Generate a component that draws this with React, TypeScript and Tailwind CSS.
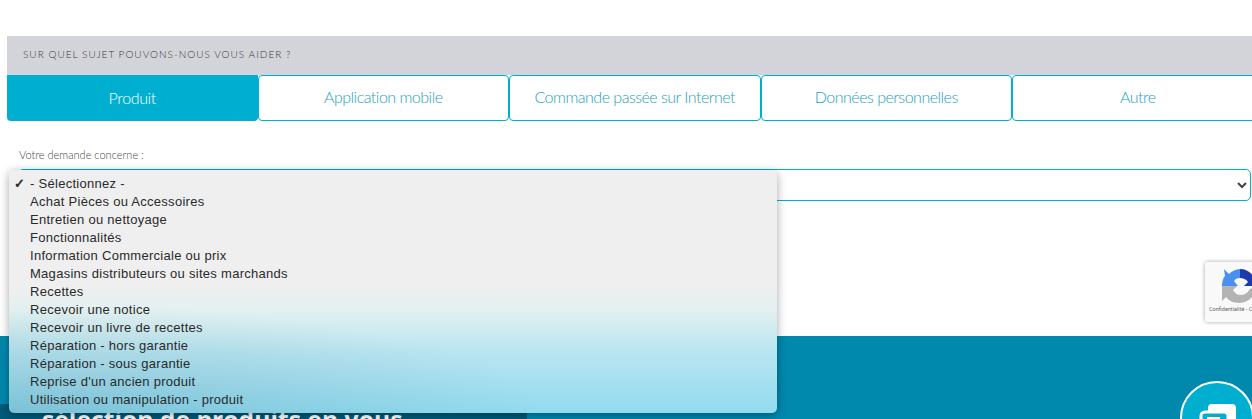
const tabs = ["Application mobile", "Commande passée sur Internet", "Données personnelles", "Autre"]

const options = [
  "- Sélectionnez -",
  "Achat Pièces ou Accessoires",
  "Entretien ou nettoyage",
  "Fonctionnalités",
  "Information Commerciale ou prix",
  "Magasins distributeurs ou sites marchands",
  "Recettes",
  "Recevoir une notice",
  "Recevoir un livre de recettes",
  "Réparation - hors garantie",
  "Réparation - sous garantie",
  "Reprise d'un ancien produit",
  "Utilisation ou manipulation - produit",
]

export default function App() {
  return (
    <div className="relative h-[419px] w-[1252px] overflow-hidden bg-white font-['Lato',sans-serif]">
      <div className="h-[336px] pt-9 pl-[7px]">
        <div className="h-[39px] bg-[#d2d4d9] pl-4 pt-[11px] text-[10px] font-light leading-[14px] tracking-[1.02px] text-[#33373e]">
          SUR QUEL SUJET POUVONS-NOUS VOUS AIDER ?
        </div>
        <div className="flex h-[46px]">
          <div className="flex w-[250.5px] shrink-0 items-center justify-center rounded-b-[4px] bg-[#00afd0] text-[16px] font-light tracking-[-0.35px] text-white">
            Produit
          </div>
          {tabs.map((t) => (
            <div
              key={t}
              className="flex w-[251.5px] shrink-0 items-center justify-center rounded-[4px] border border-[#00afd0] bg-white pb-[2px] text-[16px] font-light tracking-[-0.5px] text-[#1c9fbe]"
            >
              {t}
            </div>
          ))}
        </div>
        <div className="pl-3 pt-[27px] text-[11px] font-light leading-[14px] text-[#444]">
          Votre demande concerne :
        </div>
        <div className="ml-[11px] mt-[7px] flex h-[32px] w-[1233px] items-center justify-end rounded-[5px] border border-[#00afd0] bg-white pr-[2px]">
          <svg width="12" height="12" viewBox="0 0 12 12" fill="none" stroke="#444" strokeWidth="2">
            <path d="M2 4l4 4 4-4" />
          </svg>
        </div>
      </div>

      <div className="absolute left-[1205px] top-[262px] flex h-[60px] w-[70px] flex-col rounded-[2px] bg-[#f9f9f9] pl-[4px] pt-[7px] shadow-[0_0_4px_rgba(0,0,0,0.35)]">
        <svg className="ml-[13px]" width="34" height="34" viewBox="0 0 34 34">
          <path d="M2 0l5 5A16 16 0 0 1 18 0v9c-3 0-5 1-6 3l4 5H0c0-4 1-8 3-10z" fill="#4a90f0" />
          <path d="M18 0c9 0 16 7 16 17H22l4-4c-2-3-5-4-8-4z" fill="#1c3aa9" />
          <path d="M0 17h15l-4 4c2 3 4 5 8 5s7-3 9-6l6-3c0 9-7 17-17 17-6 0-11-3-13-6l-4 4z" fill="#b4b4b4" />
        </svg>
        <div className="mt-[3px] whitespace-nowrap font-['Roboto',sans-serif] text-[5.5px] leading-[7px] text-[#666]">
          Confidentialité - Co
        </div>
      </div>

      <div className="relative h-[83px] bg-[#0088ad] pt-[68px]">
        <div className="h-[15px] w-[527px] bg-[#005a78] pl-[42px]">
          <div className="whitespace-nowrap font-['Open_Sans',sans-serif] text-[24.7px] font-bold leading-[32px] text-white">
            sélection de produits en vous
          </div>
        </div>
        <div className="absolute left-[1180px] top-[45px] h-[74px] w-[74px] rounded-full border-2 border-white bg-[#00afd0]">
          <svg className="absolute left-[17px] top-[21px]" width="40" height="16" viewBox="0 0 40 16" fill="none">
            <rect x="9" y="0" width="28" height="24" rx="4" fill="#fff" />
            <rect x="2" y="8" width="27" height="22" rx="4" fill="#00afd0" stroke="#fff" strokeWidth="3" />
            <path d="M8 14h13" stroke="#fff" strokeWidth="2" />
          </svg>
        </div>
      </div>

      <div className="absolute left-[9px] top-[170px] h-[243px] w-[768px] rounded-[5px] bg-[radial-gradient(ellipse_70%_45%_at_0%_100%,rgba(0,60,90,0.16),rgba(0,60,90,0)),linear-gradient(to_bottom,#efefef_0,#efefef_48%,#e2f0f0_58%,#b8e5f0_75%,#92dbef_100%)] pt-[5px] font-['Liberation_Sans',sans-serif] text-[13px] leading-[18px] text-[#2a2a2a] shadow-[0_2px_10px_rgba(0,0,0,0.35)]">
        {options.map((o, i) => (
          <div key={o} className="flex whitespace-nowrap tracking-[0.28px]">
            <span className="w-[21px] pl-[5px] text-[13px] font-bold">{i === 0 ? "✓" : ""}</span>
            {o}
          </div>
        ))}
      </div>
    </div>
  )
}
